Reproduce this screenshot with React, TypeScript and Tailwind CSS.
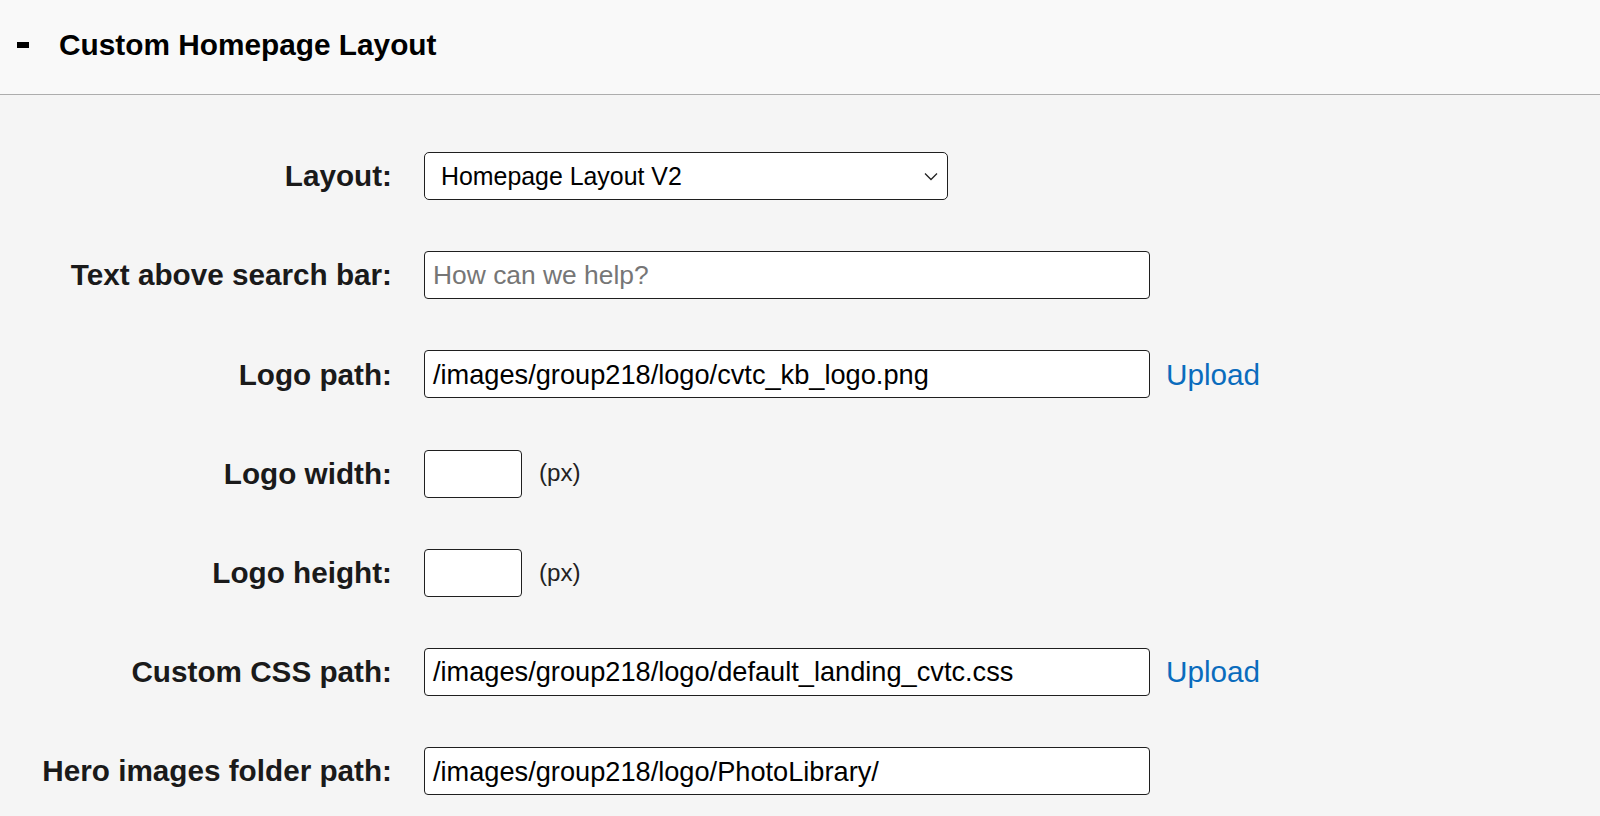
import React from "react";

const font = { fontFamily: '"Liberation Sans", Arial, sans-serif' };

function Row({ label, children }: { label: string; children: React.ReactNode }) {
  return (
    <div className="flex items-center h-[48px]">
      <div className="w-[392px] shrink-0 text-right font-bold text-[29.7px] text-[#1a1a1a] leading-none whitespace-nowrap">
        {label}
      </div>
      <div className="ml-[32px] flex items-center">{children}</div>
    </div>
  );
}

function TextBox({ value, placeholder, w }: { value?: string; placeholder?: string; w: string }) {
  return (
    <div
      className={`${w} h-[48px] bg-white border border-[#1f1f1f] rounded-[4px] flex items-center pl-[8px] leading-none whitespace-nowrap overflow-hidden`}
    >
      {value ? (
        <span className="text-black text-[27.2px]">{value}</span>
      ) : placeholder ? (
        <span className="text-[#767676] text-[26.4px]">{placeholder}</span>
      ) : null}
    </div>
  );
}

function Upload() {
  return <span className="ml-[16px] text-[29.7px] text-[#0a6cbd] leading-none">Upload</span>;
}

function Px() {
  return <span className="ml-[17px] text-[24.2px] text-[#222] leading-none">(px)</span>;
}

export default function App() {
  return (
    <div className="w-[1600px] h-[816px] bg-[#f5f5f5] overflow-hidden" style={font}>
      <div className="h-[95px] bg-[#f9f9f9] border-b border-[#adadad] flex items-center">
        <span className="ml-[17px] w-[12px] h-[6px] bg-black mt-[-5px]" />
        <span className="ml-[30px] font-bold text-[29.8px] text-black leading-none mt-[-4px]">
          Custom Homepage Layout
        </span>
      </div>
      <div className="pt-[57px] flex flex-col gap-[51.2px]">
        <Row label="Layout:">
          <div className="w-[524px] h-[48px] bg-white border border-[#1f1f1f] rounded-[5px] flex items-center justify-between pl-[16px] pr-[9px] text-[24.9px] leading-none text-black">
            <span>Homepage Layout V2</span>
            <svg width="14" height="9" viewBox="0 0 14 9" fill="none">
              <path d="M1 1.5 L7 7.5 L13 1.5" stroke="#222" strokeWidth="1.3" />
            </svg>
          </div>
        </Row>
        <Row label="Text above search bar:">
          <TextBox w="w-[726px]" placeholder="How can we help?" />
        </Row>
        <Row label="Logo path:">
          <TextBox w="w-[726px]" value="/images/group218/logo/cvtc_kb_logo.png" />
          <Upload />
        </Row>
        <Row label="Logo width:">
          <TextBox w="w-[98px]" />
          <Px />
        </Row>
        <Row label="Logo height:">
          <TextBox w="w-[98px]" />
          <Px />
        </Row>
        <Row label="Custom CSS path:">
          <TextBox w="w-[726px]" value="/images/group218/logo/default_landing_cvtc.css" />
          <Upload />
        </Row>
        <Row label="Hero images folder path:">
          <TextBox w="w-[726px]" value="/images/group218/logo/PhotoLibrary/" />
        </Row>
      </div>
    </div>
  );
}
